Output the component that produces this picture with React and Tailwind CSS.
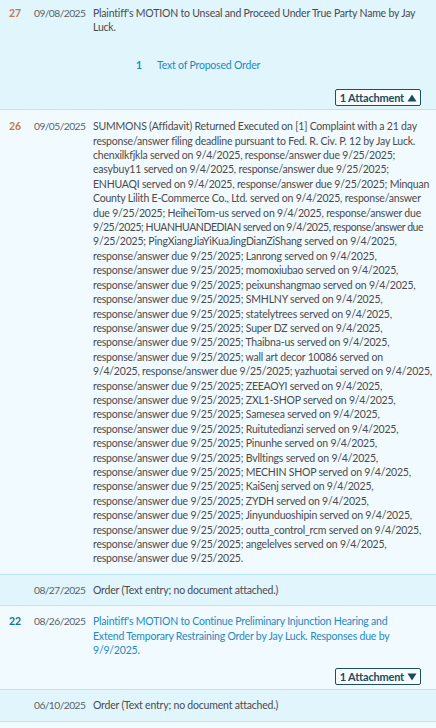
import React from 'react';

const summonsLines = [
    'SUMMONS (Affidavit) Returned Executed on [1] Complaint with a 21 day',
    'response/answer filing deadline pursuant to Fed. R. Civ. P. 12 by Jay Luck.',
    'chenxilkfjkla served on 9/4/2025, response/answer due 9/25/2025;',
    'easybuy11 served on 9/4/2025, response/answer due 9/25/2025;',
    'ENHUAQI served on 9/4/2025, response/answer due 9/25/2025; Minquan',
    'County Lilith E-Commerce Co., Ltd. served on 9/4/2025, response/answer',
    'due 9/25/2025; HeiheiTom-us served on 9/4/2025, response/answer due',
    '9/25/2025; HUANHUANDEDIAN served on 9/4/2025, response/answer due',
    '9/25/2025; PingXiangJiaYiKuaJingDianZiShang served on 9/4/2025,',
    'response/answer due 9/25/2025; Lanrong served on 9/4/2025,',
    'response/answer due 9/25/2025; momoxiubao served on 9/4/2025,',
    'response/answer due 9/25/2025; peixunshangmao served on 9/4/2025,',
    'response/answer due 9/25/2025; SMHLNY served on 9/4/2025,',
    'response/answer due 9/25/2025; statelytrees served on 9/4/2025,',
    'response/answer due 9/25/2025; Super DZ served on 9/4/2025,',
    'response/answer due 9/25/2025; Thaibna-us served on 9/4/2025,',
    'response/answer due 9/25/2025; wall art decor 10086 served on',
    '9/4/2025, response/answer due 9/25/2025; yazhuotai served on 9/4/2025,',
    'response/answer due 9/25/2025; ZEEAOYI served on 9/4/2025,',
    'response/answer due 9/25/2025; ZXL1-SHOP served on 9/4/2025,',
    'response/answer due 9/25/2025; Samesea served on 9/4/2025,',
    'response/answer due 9/25/2025; Ruitutedianzi served on 9/4/2025,',
    'response/answer due 9/25/2025; Pinunhe served on 9/4/2025,',
    'response/answer due 9/25/2025; Bvlltings served on 9/4/2025,',
    'response/answer due 9/25/2025; MECHIN SHOP served on 9/4/2025,',
    'response/answer due 9/25/2025; KaiSenj served on 9/4/2025,',
    'response/answer due 9/25/2025; ZYDH served on 9/4/2025,',
    'response/answer due 9/25/2025; Jinyunduoshipin served on 9/4/2025,',
    'response/answer due 9/25/2025; outta_control_rcm served on 9/4/2025,',
    'response/answer due 9/25/2025; angelelves served on 9/4/2025,',
    'response/answer due 9/25/2025.',
];

// each line is kept as rendered in the docket so wrapping matches;
// caps-heavy lines run wider in this font, so they get a tighter track
function Lines({ lines, className }) {
    return (
        <div className={`tracking-[-0.2px] ${className || ''}`}>
            {lines.map((l, i) => (
                <div key={i} className={`whitespace-nowrap ${/[A-Z]{8}/.test(l) && l.length > 60 ? 'tracking-[-0.45px]' : ''}`}>{l}</div>
            ))}
        </div>
    );
}

function Caret({ up }) {
    return (
        <svg width="10" height="8" viewBox="0 0 10 8" className="shrink-0">
            <path d={up ? 'M5 0.5 L9.5 7.5 L0.5 7.5 Z' : 'M0.5 0.5 L9.5 0.5 L5 7.5 Z'} fill="#1d4a5e" />
        </svg>
    );
}

function AttachmentButton({ open }) {
    return (
        <div className="flex justify-end pr-[15px]">
            <button className="h-[17px] pl-[4px] pr-[3px] flex items-center gap-[3px] rounded-[2px] border border-[#1d4f66] bg-[#f7fcff] text-[#234a5c] text-[11px] font-bold leading-none tracking-[-0.2px]">
                <span>1 Attachment</span>
                <Caret up={open} />
            </button>
        </div>
    );
}

function DateCell({ children }) {
    return <div className="w-[59px] shrink-0 text-[#5a6266] text-[10.25px] tracking-[-0.55px]">{children}</div>;
}

function Entry({ num, numClass, date, children, dark, className }) {
    return (
        <div className={`flex border-b border-[#b8e5f8] ${dark ? 'bg-[#e1f5fd]' : 'bg-[#f1faff]'} ${className || ''}`}>
            <div className={`w-[34px] shrink-0 pl-[9px] ${numClass || ''}`}>{num}</div>
            <DateCell>{date}</DateCell>
            <div className="flex-1 min-w-0">{children}</div>
        </div>
    );
}

export default function App() {
    return (
        <div className="w-[436px] h-[728px] overflow-hidden bg-[#f1faff] text-[10.5px] leading-[14.4px] text-[#4b4b4b]" style={{ fontFamily: 'Lato, "Liberation Sans", sans-serif' }}>
            <div className="border-b border-[#b8e5f8] bg-[#e1f5fd] pt-[6px] pb-[3px]">
                <div className="flex">
                    <div className="w-[34px] shrink-0 pl-[9px] font-bold text-[#c47a45]">27</div>
                    <DateCell>09/08/2025</DateCell>
                    <Lines className="flex-1" lines={[
                        "Plaintiff's MOTION to Unseal and Proceed Under True Party Name by Jay",
                        'Luck.',
                    ]} />
                </div>
                <div className="flex items-center mt-[23px] mb-[17px] tracking-[-0.2px]">
                    <div className="w-[136px] shrink-0" />
                    <div className="w-[21px] shrink-0 font-bold text-[#1b8bc2]">1</div>
                    <div className="text-[#1f88c2]">Text of Proposed Order</div>
                </div>
                <AttachmentButton open />
            </div>

            <Entry num="26" numClass="font-bold text-[#c47a45]" date="09/05/2025" className="pt-[9px] pb-[8px]">
                <Lines lines={summonsLines} />
            </Entry>

            <Entry dark date="08/27/2025" className="pt-[8px] pb-[8px]">
                <Lines lines={['Order (Text entry; no document attached.)']} />
            </Entry>

            <div className="border-b border-[#b8e5f8] bg-[#f1faff] pt-[8px] pb-[4px]">
                <div className="flex">
                    <div className="w-[34px] shrink-0 pl-[9px] font-bold text-[#1d6f9b]">22</div>
                    <DateCell>08/26/2025</DateCell>
                    <Lines className="flex-1 text-[#2489c2]" lines={[
                        "Plaintiff's MOTION to Continue Preliminary Injunction Hearing and",
                        'Extend Temporary Restraining Order by Jay Luck. Responses due by',
                        '9/9/2025.',
                    ]} />
                </div>
                <div className="mt-[11px]">
                    <AttachmentButton />
                </div>
            </div>

            <Entry dark date="06/10/2025" className="pt-[8px] pb-[8px]">
                <Lines lines={['Order (Text entry; no document attached.)']} />
            </Entry>
        </div>
    );
}
